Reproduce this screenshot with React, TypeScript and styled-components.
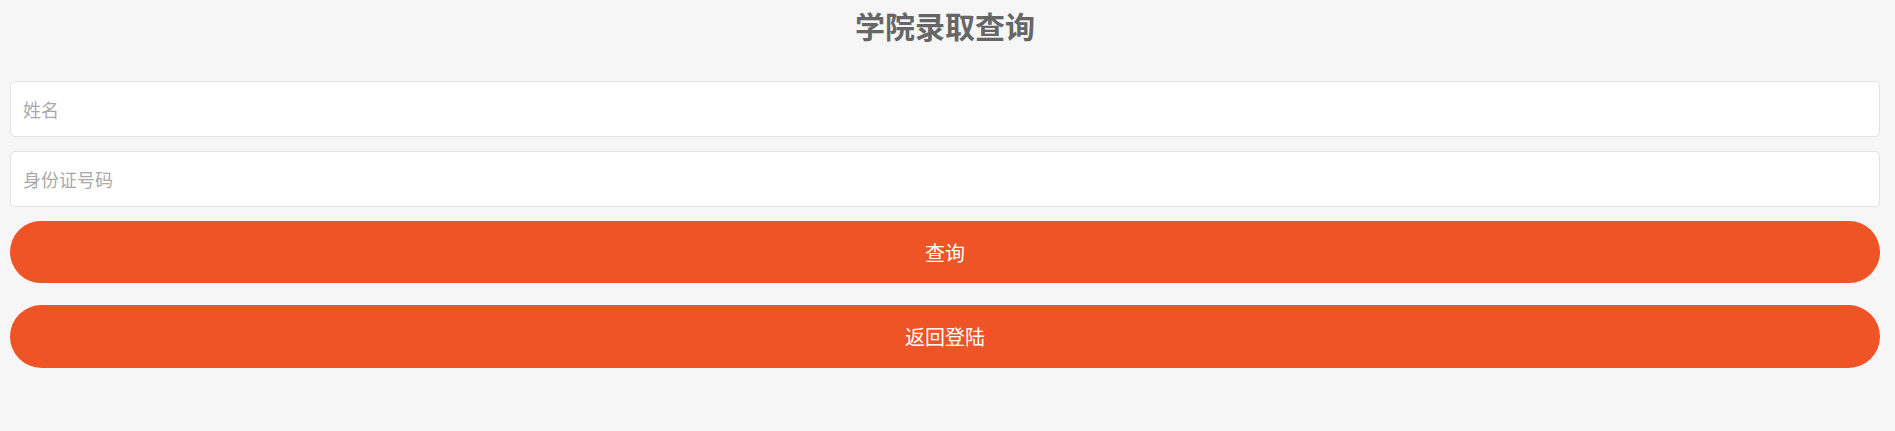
import React, { useState } from 'react';
import styled, { createGlobalStyle } from 'styled-components';

const GlobalStyle = createGlobalStyle`
  html, body {
    margin: 0;
    padding: 0;
    background-color: #f6f6f6;
    font-family: 'Liberation Sans', 'Noto Sans CJK SC', sans-serif;
  }
  * {
    box-sizing: border-box;
  }
`;

const App: React.FC = () => {
  const [name, setName] = useState('');
  const [idNo, setIdNo] = useState('');

  return (
    <Page>
      <GlobalStyle />
      <Title>学院录取查询</Title>
      <Form onSubmit={(e) => e.preventDefault()}>
        <Input
          type='text'
          value={name}
          onChange={(e) => setName(e.target.value)}
          placeholder='姓名'
        />
        <Input
          type='text'
          value={idNo}
          onChange={(e) => setIdNo(e.target.value)}
          placeholder='身份证号码'
        />
        <Button type='submit'>查询</Button>
        <Button type='button' $spaced>
          返回登陆
        </Button>
      </Form>
    </Page>
  );
};

export default App;

// --- Styled Components ---
const Page = styled.div`
  width: 100%;
  min-height: 431px;
  padding: 0 15px 0 10px;
  background-color: #f6f6f6;
`;

const Title = styled.h1`
  margin: 0;
  height: 52px;
  line-height: 50px;
  text-align: center;
  font-size: 30px;
  font-weight: bold;
  color: #666;
  font-family: 'Noto Sans CJK SC', sans-serif;
`;

const Form = styled.form`
  display: flex;
  flex-direction: column;
  margin-top: 29px;
`;

const Input = styled.input`
  width: 100%;
  height: 56px;
  padding: 0 12px;
  margin-bottom: 14px;
  border: 1px solid #e3e3e3;
  border-radius: 5px;
  background-color: #fff;
  font-size: 18px;
  color: #333;
  font-family: 'Noto Sans CJK SC', sans-serif;
  outline: none;
  &::placeholder {
    color: #a9a9a9;
  }
`;

const Button = styled.button<{ $spaced?: boolean }>`
  width: 100%;
  height: ${(p) => (p.$spaced ? '63px' : '62px')};
  margin-top: ${(p) => (p.$spaced ? '22px' : '0')};
  border: none;
  border-radius: 32px;
  background-color: #ee5425;
  color: #fff;
  font-size: 20px;
  font-family: 'Noto Sans CJK SC', sans-serif;
  cursor: pointer;
`;
